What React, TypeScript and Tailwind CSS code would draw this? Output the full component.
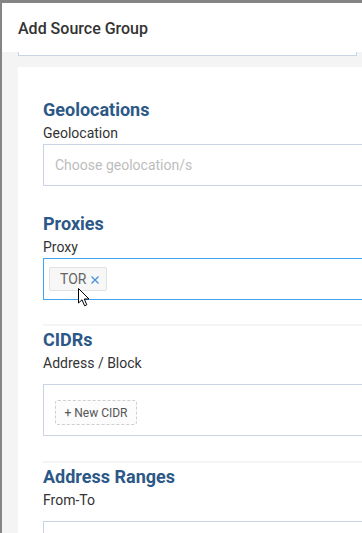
import React from 'react';

const font = { fontFamily: 'Roboto, "Liberation Sans", sans-serif' };

function Heading({ children }: { children: React.ReactNode }) {
  return <h3 className="text-[18px] leading-[22px] font-bold text-[#2c5888]">{children}</h3>;
}

function Label({ children }: { children: React.ReactNode }) {
  return <div className="mt-[2px] text-[14px] leading-[20px] text-[#333]">{children}</div>;
}

export default function App() {
  return (
    <div className="w-[362px] h-[533px] overflow-hidden bg-[#858585] pt-[3px] pl-[2px]" style={font}>
      <div className="flex flex-col h-full bg-[#f4f4f4]">
        {/* Modal header */}
        <div className="h-[49px] shrink-0 bg-white flex items-center pl-[16px] pt-[2px]">
          <span className="text-[16px] font-medium text-[#333]">Add Source Group</span>
        </div>

        {/* Scrolled body */}
        <div className="flex-1 overflow-hidden pl-[16px]">
          <div className="h-[4px] w-[339px] bg-white border-x border-b border-[#c8d4e3]" />

          <div className="relative mt-[11px] w-[400px] bg-white pl-[25px] pr-[25px] pt-[32px] pb-10">
            {/* Geolocations */}
            <Heading>Geolocations</Heading>
            <Label>Geolocation</Label>
            <div className="mt-[1px] h-[42px] border border-[#c8d4e3] flex items-center pl-[11px] text-[14px] text-[#bdbdbd]">
              Choose geolocation/s
            </div>

            {/* Proxies */}
            <div className="mt-[27px]">
              <Heading>Proxies</Heading>
              <Label>Proxy</Label>
              <div className="mt-[1px] h-[42px] border border-[#42a1f0] flex items-center pl-[5px]">
                <span className="h-[24px] w-[58px] flex items-center gap-[5px] pl-[10px] bg-[#f7f7f7] border border-[#e2e2e2] rounded-[2px] text-[14px] text-[#666]">
                  TOR
                  <svg width="8" height="8" viewBox="0 0 8 8" className="mt-[1px]">
                    <path d="M0.5 0.5 L7.5 7.5 M7.5 0.5 L0.5 7.5" stroke="#4a90d9" strokeWidth="1.3" />
                  </svg>
                </span>
              </div>
            </div>

            {/* CIDRs */}
            <div className="mt-[24px] border-t-2 border-[#f4f4f4] pt-[3px]">
              <Heading>CIDRs</Heading>
              <Label>Address / Block</Label>
              <div className="mt-[11px] h-[52px] border border-[#c8d4e3] pt-[15px] pl-[11px]">
                <span className="h-[25px] w-[82px] flex items-center justify-center border border-dashed border-[#cfcfcf] rounded-[3px] bg-[#fcfcfc] text-[12px] text-[#555]">
                  + New CIDR
                </span>
              </div>
            </div>

            {/* Address Ranges */}
            <div className="mt-[25px] border-t-2 border-[#f4f4f4] pt-[3px]">
              <Heading>Address Ranges</Heading>
              <Label>From-To</Label>
              <div className="mt-[11px] h-[52px] border border-[#c8d4e3]" />
            </div>

            {/* mouse pointer */}
            <svg className="absolute left-[60px] top-[221px]" width="12" height="19" viewBox="0 0 12 19">
              <path d="M0.5 0.5 L0.5 15 L4 11.8 L6.6 17.8 L8.8 16.8 L6.3 11 L11 11 Z" fill="#fff" stroke="#000" strokeWidth="1" strokeLinejoin="round" />
            </svg>
          </div>
        </div>
      </div>
    </div>
  );
}
